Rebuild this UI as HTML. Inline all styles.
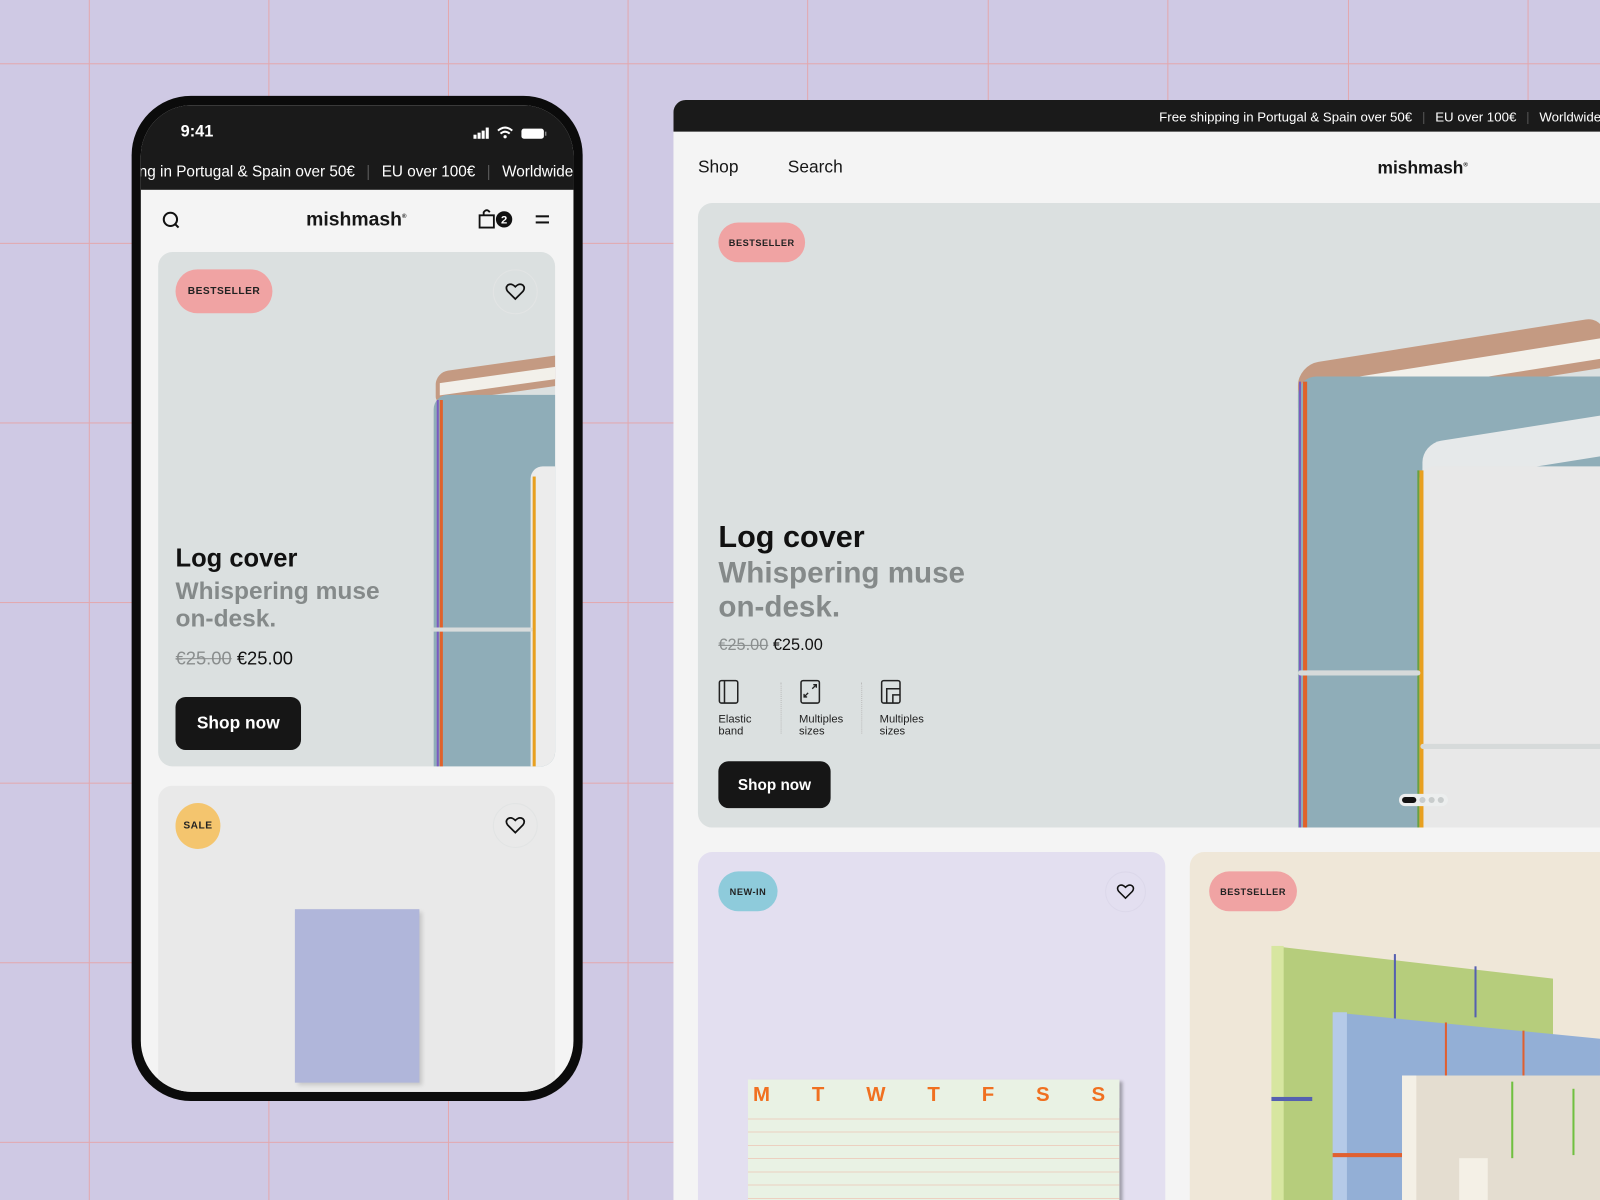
<!DOCTYPE html>
<html><head><meta charset="utf-8"><style>
*{margin:0;padding:0;box-sizing:border-box}
html,body{width:1600px;height:1200px;overflow:hidden;background:#cfc9e4;font-family:"Liberation Sans",sans-serif}
#w{position:absolute;left:0;top:0;width:1568px;height:1176px;transform:scale(1.020408);transform-origin:0 0;overflow:hidden}
.a{position:absolute}
.vl{position:absolute;top:0;width:1px;height:1176px;background:#e3a8ae}
.hl{position:absolute;left:0;height:1px;width:1568px;background:#e3a8ae}
.badge{position:absolute;font-weight:bold;font-size:10px;letter-spacing:.5px;color:#222;display:flex;align-items:center;justify-content:center}
.heart{position:absolute;width:44px;height:44px;border-radius:50%;border:1px solid #e2e4e4;display:flex;align-items:center;justify-content:center}
.btn{position:absolute;background:#161616;color:#fff;font-weight:bold;border-radius:10px;display:flex;align-items:center;justify-content:center}
</style></head><body><div id="w">
<div class="vl" style="left:87px"></div><div class="vl" style="left:263px"></div><div class="vl" style="left:439px"></div><div class="vl" style="left:615px"></div><div class="vl" style="left:791px"></div><div class="vl" style="left:968px"></div><div class="vl" style="left:1144px"></div><div class="vl" style="left:1321px"></div><div class="vl" style="left:1497px"></div>
<div class="hl" style="top:62px"></div><div class="hl" style="top:238px"></div><div class="hl" style="top:414px"></div><div class="hl" style="top:590px"></div><div class="hl" style="top:767px"></div><div class="hl" style="top:943px"></div><div class="hl" style="top:1119px"></div>

<!-- PHONE -->
<div class="a" style="left:129px;top:94px;width:442px;height:985px;border-radius:58px;background:#0b0b0b"></div>
<div class="a" style="left:138px;top:103px;width:424px;height:967px;border-radius:50px;background:#f4f4f4;overflow:hidden">
  <div class="a" style="left:0;top:0;width:424px;height:83px;background:#1a1a1a"></div>
  <div class="a" style="left:39px;top:18px;color:#fff;font-size:16px;font-weight:bold">9:41</div>
  <svg class="a" style="left:324px;top:20px" width="75" height="14" viewBox="0 0 75 14">
    <rect x="2" y="9" width="3" height="4" fill="#fff"/><rect x="6" y="7" width="3" height="6" fill="#fff"/><rect x="10" y="5" width="3" height="8" fill="#fff"/><rect x="14" y="2" width="3" height="11" fill="#fff"/>
    <path d="M26 5 Q33 -1 40 5 M28.5 8 Q33 4 37.5 8" stroke="#fff" stroke-width="2" fill="none"/><circle cx="33" cy="11" r="1.6" fill="#fff"/>
    <rect x="49" y="3" width="22" height="10" rx="2.5" fill="#fff"/><rect x="72" y="6" width="1.5" height="4" fill="#888"/>
  </svg>
  <div class="a" style="left:-2px;top:57px;color:#fff;font-size:15px;white-space:nowrap">ng in Portugal &amp; Spain over 50€ <span style="color:#555;margin:0 7px">|</span> EU over 100€ <span style="color:#555;margin:0 7px">|</span> Worldwide</div>
  <svg class="a" style="left:20px;top:103px" width="20" height="20" viewBox="0 0 20 20"><circle cx="9" cy="9" r="6.5" stroke="#111" stroke-width="2" fill="none"/><path d="M14 14 L17 17" stroke="#111" stroke-width="2"/></svg>
  <div class="a" style="left:162px;top:102px;font-size:19px;font-weight:bold;color:#161616">mishmash<sup style="font-size:6px">®</sup></div>
  <svg class="a" style="left:330px;top:100px" width="36" height="24" viewBox="0 0 36 24"><path d="M2 8 H16 V20 H2 Z M6 8 V5 Q9 1 12 5" stroke="#111" stroke-width="1.8" fill="none"/><circle cx="26" cy="12" r="8" fill="#111"/><text x="26" y="16" font-size="11" font-weight="bold" fill="#fff" text-anchor="middle" font-family="Liberation Sans">2</text></svg>
  <div class="a" style="left:387px;top:108px;width:13px;height:2px;background:#111"></div><div class="a" style="left:387px;top:114px;width:13px;height:2px;background:#111"></div>
  <!-- card1 -->
  <div class="a" style="left:17px;top:144px;width:389px;height:504px;border-radius:14px;background:#dbe0e0;overflow:hidden">
    <div class="a" style="left:272px;top:108px;width:140px;height:30px;background:#c49a82;border-radius:12px 0 0 6px;transform:skewY(-8deg)"></div>
    <div class="a" style="left:276px;top:120px;width:120px;height:12px;background:#f2f0ea;transform:skewY(-8deg)"></div>
    <div class="a" style="left:270px;top:140px;width:130px;height:380px;background:#8fadb8;border-radius:14px 0 0 0"></div>
    <div class="a" style="left:276px;top:145px;width:3px;height:370px;background:#e0622a"></div>
    <div class="a" style="left:273px;top:145px;width:2px;height:370px;background:#7a5bc0"></div>
    <div class="a" style="left:365px;top:210px;width:40px;height:300px;background:#ececec;border-radius:12px 0 0 0"></div>
    <div class="a" style="left:367px;top:220px;width:3px;height:290px;background:#e8a020"></div>
    <div class="a" style="left:267px;top:368px;width:100px;height:4px;background:#d8dcdc;border-radius:2px"></div>
    <div class="badge" style="left:17px;top:17px;width:95px;height:43px;border-radius:22px;background:#f0a3a3">BESTSELLER</div>
    <div class="heart" style="left:328px;top:17px"><svg width="20" height="18" viewBox="0 0 20 18"><path d="M10 16 L2.5 8.5 Q0 5 2.5 2.5 Q6 0 10 4 Q14 0 17.5 2.5 Q20 5 17.5 8.5 Z" stroke="#111" stroke-width="1.7" fill="none"/></svg></div>
    <div class="a" style="left:17px;top:286px;font-size:25px;font-weight:bold;color:#111">Log cover</div>
    <div class="a" style="left:17px;top:319px;font-size:24px;font-weight:bold;color:#858a8a;line-height:27px">Whispering muse<br>on-desk.</div>
    <div class="a" style="left:17px;top:388px;font-size:18px"><span style="color:#8a8e8e;text-decoration:line-through">€25.00</span> <span style="color:#111">€25.00</span></div>
    <div class="btn" style="left:17px;top:436px;width:123px;height:52px;font-size:17px">Shop now</div>
  </div>
  <!-- card2 -->
  <div class="a" style="left:17px;top:667px;width:389px;height:320px;border-radius:14px;background:#e9e9e9;overflow:hidden">
    <div class="a" style="left:134px;top:121px;width:122px;height:170px;background:#b0b6da;box-shadow:3px 3px 4px rgba(0,0,0,.15)"></div>
    <div class="badge" style="left:17px;top:17px;width:44px;height:45px;border-radius:22px;background:#f4c56e">SALE</div>
    <div class="heart" style="left:328px;top:17px"><svg width="20" height="18" viewBox="0 0 20 18"><path d="M10 16 L2.5 8.5 Q0 5 2.5 2.5 Q6 0 10 4 Q14 0 17.5 2.5 Q20 5 17.5 8.5 Z" stroke="#111" stroke-width="1.7" fill="none"/></svg></div>
  </div>
</div>

<!-- DESKTOP -->
<div class="a" style="left:660px;top:98px;width:908px;height:1078px;background:#f4f4f4;border-radius:12px 0 0 0;overflow:hidden">
  <div class="a" style="left:0;top:0;width:908px;height:31px;background:#1a1a1a"></div>
  <div class="a" style="left:476px;top:9px;color:#fff;font-size:13px;white-space:nowrap">Free shipping in Portugal &amp; Spain over 50€ <span style="color:#555;margin:0 6px">|</span> EU over 100€ <span style="color:#555;margin:0 6px">|</span> Worldwide</div>
  <div class="a" style="left:24px;top:56px;font-size:17px;color:#161616">Shop</div>
  <div class="a" style="left:112px;top:56px;font-size:17px;color:#161616">Search</div>
  <div class="a" style="left:690px;top:57px;font-size:17px;font-weight:bold;color:#161616">mishmash<sup style="font-size:6px">®</sup></div>
  <!-- hero -->
  <div class="a" style="left:24px;top:101px;width:900px;height:612px;border-radius:14px;background:#dbe0e0;overflow:hidden">
    <div class="a" style="left:588px;top:135px;width:300px;height:50px;background:#c49a82;border-radius:20px 18px 0 8px;transform:skewY(-9deg)"></div>
    <div class="a" style="left:598px;top:155px;width:290px;height:20px;background:#f2f0ea;transform:skewY(-9deg)"></div>
    <div class="a" style="left:588px;top:170px;width:300px;height:460px;background:#8fadb8;border-radius:18px 0 0 0"></div>
    <div class="a" style="left:593px;top:175px;width:4px;height:440px;background:#e0622a"></div>
    <div class="a" style="left:589px;top:175px;width:2px;height:440px;background:#7a5bc0"></div>
    <div class="a" style="left:710px;top:220px;width:200px;height:40px;background:#e6e9ea;border-radius:18px 0 0 0;transform:skewY(-9deg)"></div>
    <div class="a" style="left:706px;top:258px;width:200px;height:360px;background:#e8e8e8;border-radius:16px 0 0 0"></div>
    <div class="a" style="left:707px;top:262px;width:4px;height:350px;background:#e8a020"></div>
    <div class="a" style="left:705px;top:262px;width:2px;height:350px;background:#6aa040"></div>
    <div class="a" style="left:588px;top:458px;width:120px;height:5px;background:#d6dada;border-radius:3px"></div>
    <div class="a" style="left:708px;top:530px;width:190px;height:5px;background:#d6dada;border-radius:3px"></div>
    <div class="a" style="left:687px;top:579px;width:48px;height:12px;border-radius:6px;background:#eceeee"></div>
    <div class="a" style="left:690px;top:582px;width:14px;height:6px;border-radius:3px;background:#111"></div>
    <div class="a" style="left:707px;top:582px;width:6px;height:6px;border-radius:3px;background:#c8cccc"></div>
    <div class="a" style="left:716px;top:582px;width:6px;height:6px;border-radius:3px;background:#c8cccc"></div>
    <div class="a" style="left:725px;top:582px;width:6px;height:6px;border-radius:3px;background:#c8cccc"></div>
    <div class="badge" style="left:20px;top:19px;width:85px;height:39px;border-radius:20px;background:#f0a3a3;font-size:9px">BESTSELLER</div>
    <div class="a" style="left:20px;top:311px;font-size:30px;font-weight:bold;color:#111">Log cover</div>
    <div class="a" style="left:20px;top:347px;font-size:29px;font-weight:bold;color:#858a8a;line-height:33px">Whispering muse<br>on-desk.</div>
    <div class="a" style="left:20px;top:425px;font-size:16px"><span style="color:#8a8e8e;text-decoration:line-through">€25.00</span> <span style="color:#111">€25.00</span></div>
    <svg class="a" style="left:20px;top:466px" width="240" height="26" viewBox="0 0 240 26">
      <rect x="1" y="2" width="18" height="22" rx="2" stroke="#222" stroke-width="1.5" fill="none"/><path d="M6 2 V24" stroke="#222" stroke-width="1.5"/>
      <rect x="81" y="2" width="18" height="22" rx="2" stroke="#222" stroke-width="1.5" fill="none"/><path d="M88 14 L84 18 M84 15 V18 H87 M92 10 L96 6 M93 6 H96 V9" stroke="#222" stroke-width="1.3" fill="none"/>
      <rect x="160" y="2" width="18" height="22" rx="2" stroke="#222" stroke-width="1.5" fill="none"/><path d="M165 24 V10 H178 M171 24 V16 H178" stroke="#222" stroke-width="1.5" fill="none"/>
    </svg>
    <div class="a" style="left:81px;top:470px;width:1px;height:50px;border-left:1px dotted #bbb"></div>
    <div class="a" style="left:160px;top:470px;width:1px;height:50px;border-left:1px dotted #bbb"></div>
    <div class="a" style="left:20px;top:500px;font-size:11px;line-height:12px;color:#222">Elastic<br>band</div>
    <div class="a" style="left:99px;top:500px;font-size:11px;line-height:12px;color:#222">Multiples<br>sizes</div>
    <div class="a" style="left:178px;top:500px;font-size:11px;line-height:12px;color:#222">Multiples<br>sizes</div>
    <div class="btn" style="left:20px;top:547px;width:110px;height:46px;font-size:15px">Shop now</div>
  </div>
  <!-- bottom cards -->
  <div class="a" style="left:24px;top:737px;width:458px;height:400px;border-radius:14px;background:#e3dff0;overflow:hidden">
    <div class="a" style="left:49px;top:223px;width:364px;height:200px;background:#e9f2e4;box-shadow:3px 2px 3px rgba(0,0,0,.3);background-image:repeating-linear-gradient(to bottom,transparent 0 12px,#ecd0c0 12px 13px)"></div>
    <div class="a" style="left:49px;top:223px;width:364px;height:28px;background:#e9f2e4;color:#f07020;font-size:20px;font-weight:bold;display:flex;justify-content:space-between;align-items:center;padding:2px 14px 0 5px"><span>M</span><span>T</span><span>W</span><span>T</span><span>F</span><span>S</span><span>S</span></div>
    <div class="badge" style="left:20px;top:19px;width:58px;height:39px;border-radius:20px;background:#8ecbdb;font-size:9px">NEW-IN</div>
    <div class="heart" style="left:399px;top:19px;width:40px;height:40px;border-color:#dcd8ea"><svg width="18" height="16" viewBox="0 0 20 18"><path d="M10 16 L2.5 8.5 Q0 5 2.5 2.5 Q6 0 10 4 Q14 0 17.5 2.5 Q20 5 17.5 8.5 Z" stroke="#111" stroke-width="1.7" fill="none"/></svg></div>
  </div>
  <div class="a" style="left:506px;top:737px;width:420px;height:400px;border-radius:14px;background:#efe7d8;overflow:hidden">
    <div class="a" style="left:80px;top:92px;width:276px;height:320px;background:#b6cd7c;clip-path:polygon(0 0,100% 10%,100% 100%,0 100%)"></div>
    <div class="a" style="left:80px;top:92px;width:12px;height:320px;background:#d7e6a0"></div>
    <div class="a" style="left:200px;top:100px;width:2px;height:70px;background:#5560b0"></div>
    <div class="a" style="left:279px;top:112px;width:2px;height:50px;background:#5560b0"></div>
    <div class="a" style="left:80px;top:240px;width:40px;height:4px;background:#5560b0"></div>
    <div class="a" style="left:140px;top:157px;width:262px;height:260px;background:#93afd6;clip-path:polygon(0 0,100% 10%,100% 100%,0 100%)"></div>
    <div class="a" style="left:140px;top:157px;width:14px;height:260px;background:#b5cae8"></div>
    <div class="a" style="left:250px;top:167px;width:2px;height:58px;background:#e06030"></div>
    <div class="a" style="left:326px;top:175px;width:2px;height:50px;background:#e06030"></div>
    <div class="a" style="left:140px;top:295px;width:68px;height:4px;background:#e06030"></div>
    <div class="a" style="left:208px;top:219px;width:210px;height:200px;background:#e4ddd0"></div>
    <div class="a" style="left:208px;top:219px;width:14px;height:200px;background:#f4f0e6"></div>
    <div class="a" style="left:264px;top:300px;width:28px;height:120px;background:#f4f0e6"></div>
    <div class="a" style="left:315px;top:225px;width:2px;height:75px;background:#70c040"></div>
    <div class="a" style="left:375px;top:232px;width:2px;height:65px;background:#70c040"></div>
    <div class="badge" style="left:19px;top:19px;width:86px;height:39px;border-radius:20px;background:#f0a3a3;font-size:9px">BESTSELLER</div>
  </div>
</div>
</div></body></html>
